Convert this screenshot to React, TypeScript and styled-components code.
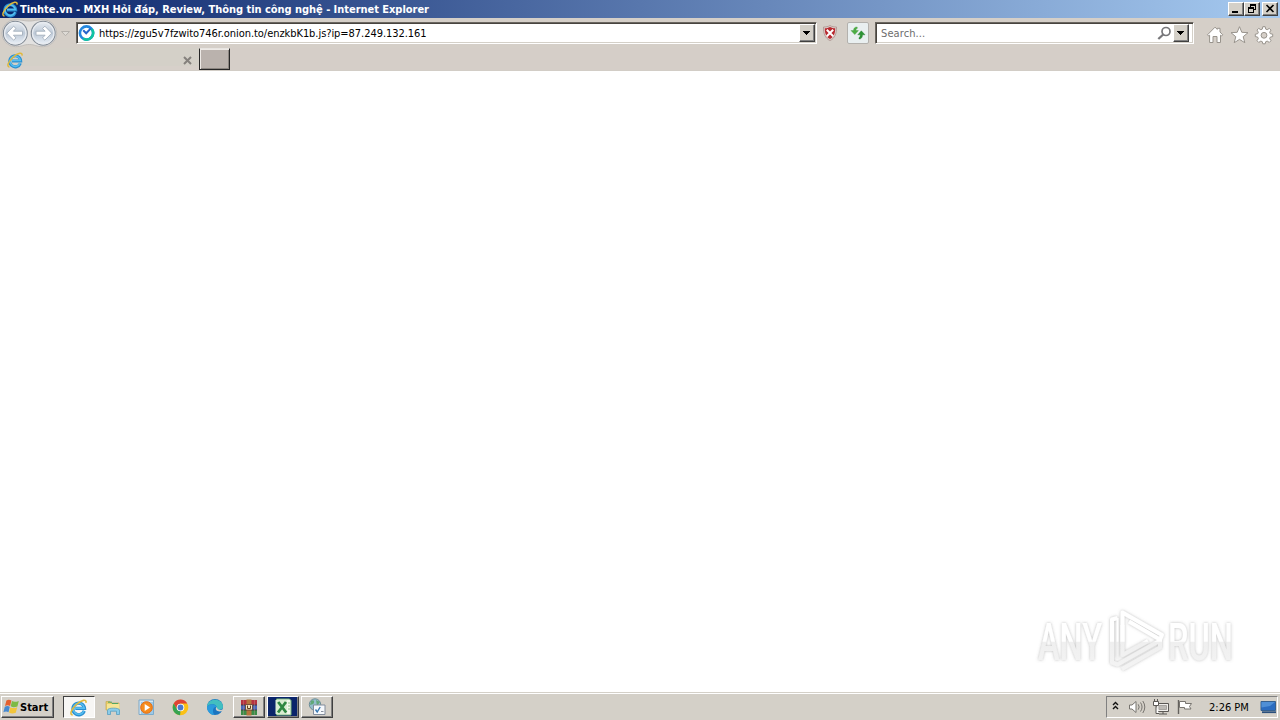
import React from "react";
import styled, { createGlobalStyle, css } from "styled-components";

const Global = createGlobalStyle`
  * { box-sizing: border-box; }
  body { margin: 0; overflow: hidden; background: #fff; }
  svg { display: block; flex: none; overflow: visible; }
`;

const raised = css`
  border: 1px solid;
  border-color: #fff #404040 #404040 #fff;
  box-shadow: inset -1px -1px 0 #808080;
`;

const Screen = styled.div`
  width: 1280px;
  height: 720px;
  display: flex;
  flex-direction: column;
  font-family: "DejaVu Sans Condensed", "DejaVu Sans", sans-serif;
  font-size: 11px;
  color: #000;
`;

const TitleBar = styled.header`
  height: 18px;
  display: flex;
  align-items: center;
  padding: 0 2px;
  background: linear-gradient(90deg, #0a246a, #a6caf0);
`;

const Label = styled.span<{ $spacing?: number; $bold?: boolean; $color?: string }>`
  display: block;
  padding-top: 2px;
  white-space: pre;
  line-height: 14px;
  letter-spacing: ${(p) => p.$spacing ?? 0}px;
  font-weight: ${(p) => (p.$bold ? 700 : 400)};
  color: ${(p) => p.$color ?? "#000"};
`;

const WindowButtons = styled.div`
  display: flex;
  margin-left: auto;
`;

const WindowButton = styled.button<{ $gap?: number }>`
  ${raised}
  width: 16px;
  height: 14px;
  padding: 0;
  margin-left: ${(p) => p.$gap ?? 0}px;
  background: #d4d0c8;
`;

const Toolbar = styled.nav`
  height: 30px;
  display: flex;
  align-items: flex-start;
  background: #d5cfc8;
`;

const Field = styled.div<{ $width: number; $right: number }>`
  width: ${(p) => p.$width}px;
  height: 22px;
  margin-top: 4px;
  display: flex;
  align-items: center;
  padding: 1px ${(p) => p.$right}px 1px 2px;
  background: #fff;
  border: 1px solid;
  border-color: #6a6660 #fff #fff #6a6660;
  box-shadow: inset 1px 1px 0 #48443f, inset -1px -1px 0 #d4d0c8;
`;

const DropButton = styled.button`
  ${raised}
  width: 16px;
  height: 18px;
  padding: 0;
  display: flex;
  align-items: center;
  justify-content: center;
  background: #d4d0c8;
`;

const Push = styled.div`
  flex: 1;
`;

const Slot = styled.div<{ $left?: number; $top?: number }>`
  margin-left: ${(p) => p.$left ?? 0}px;
  margin-top: ${(p) => p.$top ?? 0}px;
`;

const RefreshButton = styled.button`
  width: 22px;
  height: 22px;
  margin: 4px 0 0 10px;
  padding: 2px;
  border: 1px solid #b3b1ad;
  border-radius: 2px;
  background: #e9eff0;
`;

const TabStrip = styled.div`
  height: 23px;
  display: flex;
  background: #d5cec8;
  border-bottom: 1px solid #d2cdc6;
`;

const Tab = styled.div`
  width: 199px;
  height: 22px;
  display: flex;
  align-items: center;
  justify-content: space-between;
  padding: 2px 7px 0 7px;
  background: linear-gradient(#d4d0c8 0 18px, #d7d0ca 18px);
`;

const NewTab = styled.button`
  width: 31px;
  height: 22px;
  padding: 0;
  background: #bab2ad;
  border: 1px solid;
  border-color: #e8e5e1 #262626 #262626 #262626;
  box-shadow: inset 1px 1px 0 #eeeae6, inset -1px -1px 0 #8b8580;
`;

const Page = styled.main`
  flex: 1;
  display: flex;
  align-items: flex-end;
  justify-content: flex-end;
  padding: 0 30px 16px 0;
  background: #fff;
`;

const Taskbar = styled.footer`
  height: 28px;
  display: flex;
  align-items: flex-start;
  padding: 4px 2px 0 1px;
  background: linear-gradient(#d4d0c8 0 1px, #fff 1px 2px, #d4d0c8 2px);
`;

const StartButton = styled.button`
  ${raised}
  width: 53px;
  height: 22px;
  padding: 0 0 0 1px;
  margin-right: 9px;
  display: flex;
  align-items: center;
  background: #d4d0c8;
  font: inherit;
`;

const TaskButton = styled.div<{ $kind?: "raised" | "pressed" | "alert" }>`
  width: 32px;
  height: 22px;
  margin-right: 2px;
  padding-right: 1px;
  display: flex;
  align-items: center;
  justify-content: center;
  ${(p) => (p.$kind === "raised" || p.$kind === "alert" ? raised : "")}
  ${(p) => p.$kind === "alert" && "background: #0a246a;"}
  ${(p) =>
    p.$kind === "pressed" &&
    css`
      background: #f7f6f4;
      border: 1px solid;
      border-color: #404040 #fff #fff #404040;
    `}
`;

const Tray = styled.div`
  width: 172px;
  height: 22px;
  margin-left: auto;
  display: flex;
  align-items: center;
  padding-left: 5px;
  border: 1px solid;
  border-color: #808080 #fff #fff #808080;
`;

const IEIcon = ({ size = 16 }: { size?: number }) => (
  <svg width={size} height={size} viewBox="0 0 16 16" fill="none">
    <path d="M13.4 11.2A5.5 5.5 0 1 1 13.7 8.9H5" stroke="#2b8fd0" strokeWidth="3" />
    <path d="M13.1 11A5.2 5.2 0 1 1 13.4 8.6H5" stroke="#55bdf0" strokeWidth="1.5" />
    <path d="M2.5 14.9C-.7 15 1 9.8 6 5.2C10.8 .8 15.9-.3 15 3.6" stroke="#e0b93c" strokeWidth="1.5" />
  </svg>
);

const ArrowIcon = ({ flip }: { flip?: boolean }) => (
  <g transform={flip ? "translate(58.5 0) scale(-1 1)" : undefined}>
    <circle cx="15.3" cy="15.2" r="11.9" fill="url(#disc)" stroke="#858d97" strokeWidth="1.2" />
    <circle cx="15.3" cy="15.2" r="10.7" fill="none" stroke="#e7ebf0" strokeWidth="1.3" />
    <path d="M6.8 15.2L13.6 8.2L16 10.5L13.4 13.2H22.5V17.2H13.4L16 19.9L13.6 22.2Z" fill="#fff" stroke="#a4afbc" strokeWidth=".9" />
  </g>
);

const NavButtons = () => (
  <svg width="76" height="30" viewBox="0 0 76 30">
    <defs>
      <linearGradient id="disc" x1="0" y1="0" x2="0" y2="1">
        <stop offset="0" stopColor="#e9edf2" />
        <stop offset=".5" stopColor="#bdc9d7" />
        <stop offset="1" stopColor="#edf3f9" />
      </linearGradient>
    </defs>
    <path d="M15.3 1.7C22 1.7 24 3 29.3 3S36 1.7 43.3 1.7A13.5 13.5 0 0 1 43.3 28.7C36 28.7 35 26.5 29.3 26.5S22 28.7 15.3 28.7A13.5 13.5 0 0 1 15.3 1.7" fill="#e2e1e0" stroke="#c0bdb9" />
    <ArrowIcon />
    <ArrowIcon flip />
    <path d="M61.5 13.5H69.5L65.5 17.7Z" fill="#dedbd6" stroke="#b5b1ac" />
  </svg>
);

const SiteIcon = () => (
  <svg width="16" height="16" viewBox="0 0 16 16" fill="none">
    <circle cx="7.5" cy="8" r="6.6" fill="#fff" stroke="#2387df" strokeWidth="2.6" />
    <path d="M12.8 4.1A6.6 6.6 0 0 1 4.2 13.7" stroke="#12c3a0" strokeWidth="2.6" />
    <path d="M4.2 5.2L7.2 8.2L11.6 3.6" stroke="#2564cb" strokeWidth="2" />
  </svg>
);

const DownArrow = () => (
  <svg width="8" height="5" viewBox="0 0 8 5" shapeRendering="crispEdges">
    <path d="M0 0H7V1H0ZM1 1H6V2H1ZM2 2H5V3H2ZM3 3H4V4H3Z" />
  </svg>
);

const StopIcon = () => (
  <svg width="14" height="16" viewBox="0 0 14 16">
    <path d="M7 .5C8.8 1.7 11 2 13.5 2C13.8 8 12 13.2 7 15.6C2 13.2 .2 8 .5 2C3 2 5.2 1.7 7 .5Z" fill="#dccfcb" stroke="#ab918d" strokeWidth=".8" />
    <path d="M7 2C8.8 3 10 3.2 12.2 3.3C12.3 8 10.8 12.2 7 14.1C3.2 12.2 1.7 8 1.8 3.3C4 3.2 5.2 3 7 2Z" fill="#b8292f" />
    <path d="M3.8 4.8L10.2 11.2M10.2 4.8L3.8 11.2" stroke="#fff" strokeWidth="2" />
  </svg>
);

const RefreshIcon = () => (
  <svg width="16" height="16" viewBox="0 0 16 16">
    <path d="M7.2 2C4.6 2 3.6 3.3 3.6 5.6H1L4.8 9.6L8.4 5.6H5.9C5.9 4.5 6.2 3.8 7.2 3.5Z" fill="#4cae42" stroke="#3c963a" strokeWidth=".4" />
    <path d="M9 14C11.4 14 12.5 12.5 12.5 9.8H15L11.3 5.8L7.8 9.8H10.2C10.2 11.5 9.9 12.2 9 12.6Z" fill="#2c9434" stroke="#20792c" strokeWidth=".4" />
  </svg>
);

const SearchIcon = () => (
  <svg width="15" height="15" viewBox="0 0 15 15" fill="none" stroke="#77777a">
    <circle cx="9" cy="5.5" r="4" strokeWidth="1.7" />
    <path d="M6.2 8.5L1.3 13" strokeWidth="2.3" />
  </svg>
);

const CommandIcons = () => (
  <svg width="70" height="20" viewBox="0 0 70 20" fill="#fff" stroke="#98938c" strokeWidth="1" strokeLinejoin="round">
    <path d="M1.5 9.8L9 2.2L11.3 4.4V3.3H14V7L16.7 9.8L15.5 11L14.5 10.2V17.5H11V11.5H7V17.5H3.6V10.2L2.7 11Z" />
    <path d="M33.5 1.7L35.8 7.3L42 7.7L37.2 11.7L38.8 17.7L33.5 14.4L28.2 17.7L29.8 11.7L25 7.7L31.2 7.3Z" />
    <path fillRule="evenodd" d="M56.8 1.7H59.2L59.7 4.1L61.2 4.7L63.3 3.4L65 5.1L63.7 7.2L64.3 8.7L66.7 9.2V11.6L64.3 12.1L63.7 13.6L65 15.7L63.3 17.4L61.2 16.1L59.7 16.7L59.2 18.8H56.8L56.3 16.7L54.8 16.1L52.7 17.4L51 15.7L52.3 13.6L51.7 12.1L49.3 11.6V9.2L51.7 8.7L52.3 7.2L51 5.1L52.7 3.4L54.8 4.7L56.3 4.1ZM58 7.4A2.9 2.9 0 1 0 58 13.2A2.9 2.9 0 0 0 58 7.4Z" />
  </svg>
);

const WindowsFlag = () => (
  <svg width="17" height="16" viewBox="0 0 17 16">
    <path d="M3.4 1.5C5.3 .4 6.8 .6 8.4 1.6L7.1 7C5.4 6.1 3.8 6.1 2 7.1Z" fill="#e4602f" />
    <path d="M9 2C10.8 3.2 13 3 15.8 1.9L14.4 7.4C11.7 8.5 9.7 8.5 7.7 7.3Z" fill="#7dba45" />
    <path d="M1.8 7.8C3.7 6.8 5.3 6.9 6.8 7.8L5.5 13.3C3.9 12.2 2.2 12.2 .4 13.3Z" fill="#4689d0" />
    <path d="M7.4 8.2C9.4 9.4 11.3 9.3 14.2 8.2L12.8 13.8C10.1 14.9 8 14.8 6 13.6Z" fill="#f2c53b" />
  </svg>
);

const FolderIcon = () => (
  <svg width="18" height="17" viewBox="0 0 18 17">
    <path d="M2 2.5H6L7 4H15V11H2Z" fill="#e8cd68" stroke="#c6aa50" strokeWidth=".7" />
    <path d="M3 5H15.5V12H3Z" fill="#f5e596" />
    <path d="M4 3.2H8M8 4.5H14" stroke="#51a666" />
    <path d="M3.5 15.5V11C3.5 8.5 15.5 8.5 15.5 11V15.5H12.5V12.2H6.5V15.5Z" fill="#8bcce9" stroke="#4c98bd" strokeWidth=".7" />
  </svg>
);

const MediaIcon = () => (
  <svg width="17" height="17" viewBox="0 0 17 17">
    <path d="M1 1H15.5V15.5H1Z" fill="#d4e7f4" stroke="#7da8c7" />
    <path d="M3 3H15.5V15.5H3Z" fill="#79b6de" opacity=".6" />
    <circle cx="8.5" cy="8.5" r="5.8" fill="#f68b1d" stroke="#e36a11" />
    <path d="M6.7 5L12 8.5L6.7 12Z" fill="#fff" />
  </svg>
);

const ChromeIcon = () => (
  <svg width="17" height="17" viewBox="0 0 17 17">
    <circle cx="8.5" cy="8.5" r="7.8" fill="#fbc116" />
    <path d="M1.7 4.6A7.8 7.8 0 0 1 15.3 4.6H8.5L5.1 10.5Z" fill="#df4335" />
    <path d="M1.7 4.6L5.2 10.5L8.5 12.3L8 16.3A7.8 7.8 0 0 1 1.7 4.6Z" fill="#35a352" />
    <circle cx="8.5" cy="8.5" r="3.8" fill="#fff" />
    <circle cx="8.5" cy="8.5" r="2.9" fill="#4a78ce" />
  </svg>
);

const EdgeIcon = () => (
  <svg width="18" height="18" viewBox="0 0 18 18">
    <circle cx="9" cy="9" r="8" fill="#1b75c0" />
    <path d="M1 9C1-.5 16.8-1.1 17 9C17 12.3 11.2 12.6 10.6 10.2C11.6 6.3 4 4.5 1 9Z" fill="#42bfc0" />
    <path d="M1 8.8C4 4.8 9.9 5.7 10.8 9.2C7.5 7.8 5.7 12.7 8.2 16.9C3.9 17 .8 12.9 1 8.8Z" fill="#2b9bdd" />
    <path d="M10.6 9C7.8 12 12.8 14.8 16.2 12.8L18 13V10.6C16.7 12.5 11.2 12.6 10.6 9Z" fill="#d4d0c8" />
  </svg>
);

const RarIcon = () => (
  <svg width="18" height="17" viewBox="0 0 18 17">
    <path d="M1 1H17V6H1Z" fill="#b53240" />
    <path d="M1 6H17V11H1Z" fill="#4966b8" />
    <path d="M1 11H17V16H1Z" fill="#3b8c48" />
    <path d="M1 6H5M13 6H17M1 11H17" stroke="#3b3338" strokeWidth=".8" />
    <path d="M6.5 .5H11.5V16.5H6.5Z" fill="#b5743d" />
    <path d="M3.5 1V16M14.5 1V16" stroke="#c89f92" opacity=".35" />
    <path d="M5.5 5.5H12.5V11H5.5Z" fill="#f2e3bd" stroke="#5d392b" strokeWidth=".8" />
    <path d="M7.5 6.5V9.5H10.5V6.5" fill="none" stroke="#60401f" />
  </svg>
);

const ExcelIcon = () => (
  <svg width="18" height="18" viewBox="0 0 18 18">
    <path d="M2.5 1H15.5L17 2.5V17H2.5Z" fill="#f1f7ec" stroke="#74b474" />
    <path d="M1.5 2H13V16H1.5Z" fill="#d9edd2" />
    <path d="M4.2 4L12.2 14.5M12 4L4 14.5" stroke="#2e8742" strokeWidth="2.8" />
    <path d="M14 5H16M14 8H16M14 11H16" stroke="#8cc48a" />
  </svg>
);

const TaskIcon = () => (
  <svg width="18" height="18" viewBox="0 0 18 18">
    <circle cx="7" cy="6.5" r="5.7" fill="#93bdcc" stroke="#6d8d96" />
    <path d="M3 3C6 1 7 4 5.3 6L2 7ZM8 2L12 4L9 8Z" fill="#60a878" />
    <path d="M5.5 7H17V16.5H5.5Z" fill="#f5f8fc" stroke="#828c9b" />
    <path d="M7.5 11.5L9.2 14L12.2 9" fill="none" stroke="#3777b0" strokeWidth="1.4" />
    <path d="M13 13.5H15.5" stroke="#878f9d" />
  </svg>
);

const TrayIcons = () => (
  <svg width="84" height="20" viewBox="0 0 84 20" fill="none" stroke="#77746f">
    <path d="M1 8L3.5 5.5L6 8M1 12L3.5 9.5L6 12" stroke="#111" strokeWidth="1.4" />
    <path d="M17.5 8H20L24 4.5V15.5L20 12H17.5Z" fill="#fff" />
    <path d="M26.2 7.3Q28.2 10 26.2 12.7M28.5 5.5Q31.6 10 28.5 14.5M30.8 4Q34.8 10 30.8 16" />
    <path d="M44.5 6.5H56.5V14.5H44.5ZM47 17H55M51 15V17" fill="#f0eeeb" stroke="#5b5854" />
    <path d="M47 8.5H54.5V12.5H47Z" fill="#bdbab5" stroke="#a6a39f" />
    <path d="M41.5 4.5H46.5V8.5H41.5ZM42.5 2V5M45.5 2V5M44 8.5V16.5H47" fill="#fff" stroke="#5b5854" />
    <path d="M66.5 3V17" stroke="#64615d" strokeWidth="1.4" />
    <path d="M67.5 4.5H73.5V6.5H79.5L77.5 9.5L79 12H72.5V10.5H67.5Z" fill="#fff" />
  </svg>
);

const DesktopIcon = () => (
  <svg width="16" height="16" viewBox="0 0 16 16">
    <path d="M0 2.5H14.5V11.5H0Z" fill="#2b6cc0" stroke="#36608f" />
    <path d="M.5 3H14L9 7L.5 8.5Z" fill="#4f8fd6" />
    <path d="M1 13.2H15" stroke="#2a4f7c" strokeWidth="1.8" />
  </svg>
);

const Watermark = () => (
  <svg width="216" height="68" viewBox="1034 608 216 68" fontFamily="Roboto, sans-serif" fontWeight="500" fontSize="51">
    <defs>
      <linearGradient id="mark" gradientUnits="userSpaceOnUse" x1="0" y1="608" x2="0" y2="676">
        <stop offset="0" stopColor="#fff" />
        <stop offset=".49" stopColor="#fff" />
        <stop offset=".5" stopColor="#efefef" />
        <stop offset="1" stopColor="#f5f5f5" />
      </linearGradient>
      <filter id="glow" x="-10%" y="-20%" width="120%" height="140%">
        <feDropShadow dx="0" dy="0" stdDeviation="1.5" floodColor="#777" floodOpacity=".5" />
      </filter>
    </defs>
    <g fill="url(#mark)" filter="url(#glow)">
      <text x="1038" y="659.5" textLength="64" lengthAdjust="spacingAndGlyphs">ANY</text>
      <text x="1168" y="659.5" textLength="65" lengthAdjust="spacingAndGlyphs">RUN</text>
      <g fill="none" stroke="url(#mark)" strokeWidth="4" strokeLinejoin="round">
        <path d="M1122.5 644V612.5L1162 635L1160 639.5L1129 621.5" />
        <path d="M1117.5 618L1112 619.5V662.5L1117.5 664.5L1161 640" />
        <path d="M1117.5 618V658" strokeWidth="2" />
        <path d="M1122.5 625V655L1148 641" />
        <path d="M1122 669L1160 647.5V640" />
      </g>
    </g>
  </svg>
);

export default function App() {
  return (
    <Screen>
      <Global />
      <TitleBar>
        <IEIcon />
        <Slot $left={2}>
          <Label $bold $color="#fff" $spacing={-0.035}>Tinhte.vn - MXH Hỏi đáp, Review, Thông tin công nghệ - Internet Explorer</Label>
        </Slot>
        <WindowButtons>
          <WindowButton aria-label="Minimize">
            <svg width="14" height="12" shapeRendering="crispEdges"><path d="M3 8H9V10H3Z" /></svg>
          </WindowButton>
          <WindowButton aria-label="Restore">
            <svg width="14" height="12" shapeRendering="crispEdges" fill="none" stroke="#000">
              <path d="M5.5 4V1.5H10.5V6.5H9M5 2.5H11M3.5 4.5H8.5V9.5H3.5ZM3 5.5H9" />
            </svg>
          </WindowButton>
          <WindowButton $gap={2} aria-label="Close">
            <svg width="14" height="12" stroke="#000" strokeWidth="1.6"><path d="M3.5 2L10.5 9M10.5 2L3.5 9" /></svg>
          </WindowButton>
        </WindowButtons>
      </TitleBar>
      <Toolbar>
        <NavButtons />
        <Field $width={741} $right={1}>
          <SiteIcon />
          <Slot $left={4}>
            <Label $spacing={-0.055}>https://zgu5v7fzwito746r.onion.to/enzkbK1b.js?ip=87.249.132.161</Label>
          </Slot>
          <Push />
          <DropButton aria-label="Addresses"><DownArrow /></DropButton>
        </Field>
        <Slot $left={6} $top={7}><StopIcon /></Slot>
        <RefreshButton aria-label="Refresh"><RefreshIcon /></RefreshButton>
        <Slot $left={6}>
          <Field $width={319} $right={4}>
            <Slot $left={3}><Label $color="#6d6d6d" $spacing={0.1}>Search...</Label></Slot>
            <Push />
            <SearchIcon />
            <Slot $left={1}><DropButton aria-label="Search options"><DownArrow /></DropButton></Slot>
          </Field>
        </Slot>
        <Slot $left={12} $top={7}><CommandIcons /></Slot>
      </Toolbar>
      <TabStrip>
        <Tab>
          <IEIcon />
          <svg width="9" height="9" stroke="#85817d" strokeWidth="2"><path d="M1 1L8 8M8 1L1 8" /></svg>
        </Tab>
        <NewTab aria-label="New tab" />
      </TabStrip>
      <Page><Watermark /></Page>
      <Taskbar>
        <StartButton>
          <WindowsFlag />
          <Label $bold>Start</Label>
        </StartButton>
        <TaskButton $kind="pressed"><IEIcon size={17} /></TaskButton>
        <TaskButton><FolderIcon /></TaskButton>
        <TaskButton><MediaIcon /></TaskButton>
        <TaskButton><ChromeIcon /></TaskButton>
        <TaskButton><EdgeIcon /></TaskButton>
        <TaskButton $kind="raised"><RarIcon /></TaskButton>
        <TaskButton $kind="alert"><ExcelIcon /></TaskButton>
        <TaskButton $kind="raised"><TaskIcon /></TaskButton>
        <Tray>
          <TrayIcons />
          <Slot $left={13}><Label>2:26 PM</Label></Slot>
          <Push />
          <DesktopIcon />
        </Tray>
      </Taskbar>
    </Screen>
  );
}
